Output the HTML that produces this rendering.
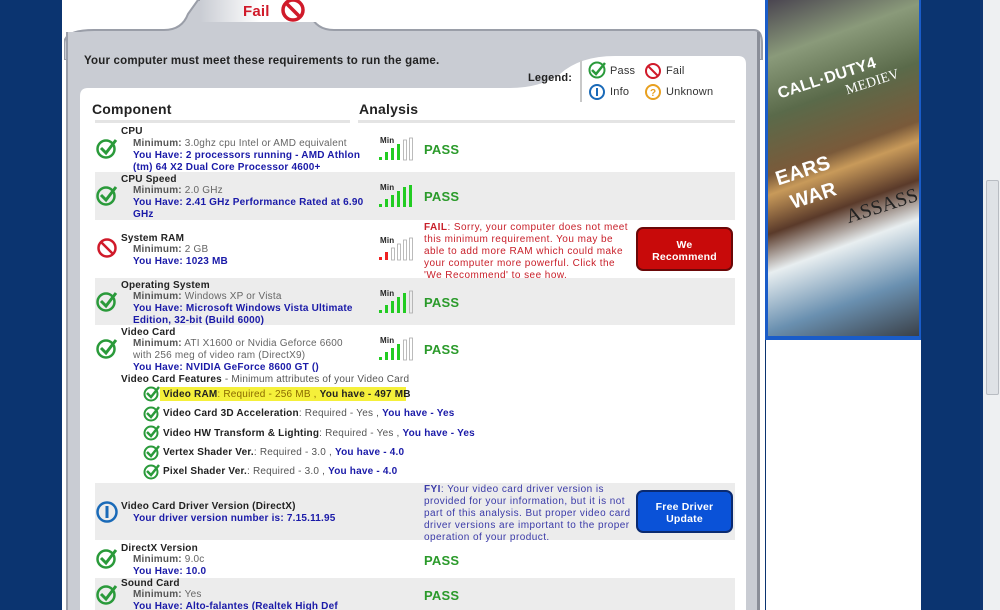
<!DOCTYPE html>
<html style="overflow:hidden;width:1000px;height:610px"><head><meta charset="utf-8"><style>
*{margin:0;padding:0;box-sizing:border-box}
body{width:1000px;height:610px;overflow:hidden;background:#0b3470;font-family:"Liberation Sans",sans-serif;font-size:10px;position:relative;letter-spacing:0.2px}
.a{position:absolute}
.white{left:62px;top:0;width:703px;height:610px;background:#fff}
.row{position:absolute;left:95px;width:640px}
.g{background:#ececec}
.t{font-weight:bold;color:#222;position:absolute;left:121px;line-height:12px}
.m{position:absolute;left:133px;color:#666;line-height:12px}
.m b{color:#555}
.h{position:absolute;left:133px;color:#1a1aa8;font-weight:bold;line-height:12px}
.pass{position:absolute;left:424px;color:#2a9a2a;font-weight:bold;font-size:13px}
.ic{position:absolute;left:96px}
.bars{position:absolute;left:378px}
.feat{position:absolute;left:145px;color:#555;line-height:14px}
.feat b{color:#222}
.feat span{color:#1a1aa8;font-weight:bold}
</style></head><body>
<div class="a white"></div>
<!-- tab -->
<svg class="a" style="left:64px;top:0" width="700" height="60"><path d="M0 60 L0 44 Q0 30 30 30 L100 30 Q118 30 124 14 L134 0 L236 0 L246 14 Q252 30 270 30 L690 30 Q698 30 698 44 L698 60 Z" fill="#c9ccd3" stroke="#9a9ea8" stroke-width="2"/></svg>
<div class="a" style="left:66px;top:32px;width:694px;height:578px;background:#c9ccd3;border-left:2px solid #9a9ea8;border-right:3px solid #8a8e98"></div>
<div class="a" style="left:200px;top:0;width:120px;height:22px;background:linear-gradient(90deg,#c9ccd3,#fff 50%)"></div>
<div class="a" style="left:243px;top:3px;color:#d01a2a;font-weight:bold;font-size:15px">Fail</div>
<svg class="a" style="left:279px;top:-2px" width="28" height="26"><circle cx="14" cy="12" r="10" fill="none" stroke="#d01a2a" stroke-width="3.5"/><line x1="7" y1="5" x2="21" y2="19" stroke="#d01a2a" stroke-width="3.5"/></svg>
<!-- inner white with notch -->
<svg class="a" style="left:80px;top:52px" width="666" height="60"><path d="M0 60 L0 44 Q0 36 8 36 L430 36 Q460 36 480 22 Q500 4 535 4 L658 4 Q666 4 666 12 L666 60 Z" fill="#fff"/></svg>
<div class="a" style="left:80px;top:110px;width:666px;height:500px;background:#fff"></div>
<div class="a" style="left:84px;top:55px;font-weight:bold;font-size:11.5px;color:#222">Your computer must meet these requirements to run the game.</div>
<div class="a" style="left:528px;top:72px;font-weight:bold;font-size:11px;color:#222">Legend:</div>
<div class="a" style="left:580px;top:60px;width:2px;height:42px;background:#c8c8c8"></div>
<svg class="a" style="left:588px;top:61px" width="20" height="18"><circle cx="9" cy="9" r="7.5" fill="none" stroke="#2a9a3a" stroke-width="2"/><path d="M4 9 L8 13 L17 2" fill="none" stroke="#2a9a3a" stroke-width="2.5"/></svg>
<div class="a" style="left:610px;top:65px;color:#333;font-size:11px">Pass</div>
<svg class="a" style="left:644px;top:62px" width="18" height="18"><circle cx="9" cy="9" r="7" fill="none" stroke="#d01a2a" stroke-width="2"/><line x1="4" y1="4" x2="14" y2="14" stroke="#d01a2a" stroke-width="2"/></svg>
<div class="a" style="left:666px;top:65px;color:#333;font-size:11px">Fail</div>
<svg class="a" style="left:588px;top:83px" width="18" height="18"><circle cx="9" cy="9" r="7" fill="none" stroke="#1a6ab8" stroke-width="2"/><rect x="8" y="5" width="2" height="8" fill="#1a6ab8"/></svg>
<div class="a" style="left:610px;top:86px;color:#333;font-size:11px">Info</div>
<svg class="a" style="left:644px;top:83px" width="18" height="18"><circle cx="9" cy="9" r="7" fill="none" stroke="#e8a020" stroke-width="2"/><text x="6" y="13" font-size="10" fill="#e8a020" font-weight="bold" font-family="Liberation Sans">?</text></svg>
<div class="a" style="left:666px;top:86px;color:#333;font-size:11px">Unknown</div>
<div class="a" style="left:92px;top:101px;font-weight:bold;font-size:14px;color:#222">Component</div>
<div class="a" style="left:359px;top:101px;font-weight:bold;font-size:14px;color:#222">Analysis</div>
<div class="a" style="left:95px;top:120px;width:255px;height:3px;background:#e4e4e4"></div>
<div class="a" style="left:358px;top:120px;width:377px;height:3px;background:#e4e4e4"></div>

<div class="row g" style="top:172px;height:48px"></div>
<div class="row g" style="top:278px;height:47px"></div>
<div class="row g" style="top:483px;height:57px"></div>
<div class="row g" style="top:578px;height:40px"></div>

<svg width="0" height="0" style="position:absolute"><defs>
<g id="ck"><circle cx="10" cy="11" r="8.5" fill="none" stroke="#2a9a3a" stroke-width="2.5"/><path d="M5 10 L10 15 L20 2" fill="none" stroke="#2a9a3a" stroke-width="3"/></g>
<g id="sg"><text x="2" y="7" font-size="8" font-weight="bold" fill="#222" font-family="Liberation Sans">Min</text></g>
</defs></svg>

<!-- CPU -->
<div class="t" style="top:126px">CPU</div>
<div class="m" style="top:138px"><b>Minimum:</b> 3.0ghz cpu Intel or AMD equivalent</div>
<div class="h" style="top:150px">You Have: 2 processors running - AMD Athlon<br>(tm) 64 X2 Dual Core Processor 4600+</div>
<svg class="ic" style="top:138px" width="24" height="22"><use href="#ck"/></svg>
<svg class="bars" style="top:136px" width="38" height="26"><use href="#sg"/><rect x="1" y="21" width="3" height="3" fill="#2c2"/><rect x="7" y="16" width="3" height="8" fill="#2c2"/><rect x="13" y="12" width="3" height="12" fill="#2c2"/><rect x="19" y="8" width="3" height="16" fill="#2c2"/><rect x="25.5" y="4" width="3" height="20" fill="none" stroke="#aaa" stroke-width=".8"/><rect x="31.5" y="2" width="3" height="22" fill="none" stroke="#aaa" stroke-width=".8"/></svg>
<div class="pass" style="top:142px">PASS</div>
<!-- CPU Speed -->
<div class="t" style="top:174px">CPU Speed</div>
<div class="m" style="top:185px"><b>Minimum:</b> 2.0 GHz</div>
<div class="h" style="top:197px">You Have: 2.41 GHz Performance Rated at 6.90<br>GHz</div>
<svg class="ic" style="top:185px" width="24" height="22"><use href="#ck"/></svg>
<svg class="bars" style="top:183px" width="38" height="26"><use href="#sg"/><rect x="1" y="21" width="3" height="3" fill="#2c2"/><rect x="7" y="16" width="3" height="8" fill="#2c2"/><rect x="13" y="12" width="3" height="12" fill="#2c2"/><rect x="19" y="8" width="3" height="16" fill="#2c2"/><rect x="25" y="4" width="3" height="20" fill="#2c2"/><rect x="31" y="2" width="3" height="22" fill="#2c2"/></svg>
<div class="pass" style="top:189px">PASS</div>
<!-- RAM -->
<div class="t" style="top:233px">System RAM</div>
<div class="m" style="top:244px"><b>Minimum:</b> 2 GB</div>
<div class="h" style="top:256px">You Have: 1023 MB</div>
<svg class="ic" style="top:237px" width="24" height="22"><circle cx="11" cy="11" r="8.5" fill="none" stroke="#d01a2a" stroke-width="2.5"/><line x1="5" y1="5" x2="17" y2="17" stroke="#d01a2a" stroke-width="2.5"/></svg>
<svg class="bars" style="top:236px" width="38" height="26"><use href="#sg"/><rect x="1" y="21" width="3" height="3" fill="#e22"/><rect x="7" y="16" width="3" height="8" fill="#e22"/><g fill="none" stroke="#aaa" stroke-width=".8"><rect x="13.5" y="12" width="3" height="12"/><rect x="19.5" y="8" width="3" height="16"/><rect x="25.5" y="4" width="3" height="20"/><rect x="31.5" y="2" width="3" height="22"/></g></svg>
<div class="a" style="left:424px;top:222px;color:#c8202a;line-height:12px;width:208px;letter-spacing:0.45px"><b>FAIL</b>: Sorry, your computer does not meet this minimum requirement. You may be able to add more RAM which could make your computer more powerful. Click the 'We Recommend' to see how.</div>
<div class="a" style="left:636px;top:227px;width:97px;height:44px;background:#c80a0a;border:2px solid #6a0808;border-radius:7px;color:#fff;font-weight:bold;font-size:10.5px;text-align:center;padding-top:10px;line-height:12px">We<br>Recommend</div>
<!-- OS -->
<div class="t" style="top:280px">Operating System</div>
<div class="m" style="top:291px"><b>Minimum:</b> Windows XP or Vista</div>
<div class="h" style="top:303px">You Have: Microsoft Windows Vista Ultimate<br>Edition, 32-bit (Build 6000)</div>
<svg class="ic" style="top:291px" width="24" height="22"><use href="#ck"/></svg>
<svg class="bars" style="top:289px" width="38" height="26"><use href="#sg"/><rect x="1" y="21" width="3" height="3" fill="#2c2"/><rect x="7" y="16" width="3" height="8" fill="#2c2"/><rect x="13" y="12" width="3" height="12" fill="#2c2"/><rect x="19" y="8" width="3" height="16" fill="#2c2"/><rect x="25" y="4" width="3" height="20" fill="#2c2"/><rect x="31.5" y="2" width="3" height="22" fill="none" stroke="#aaa" stroke-width=".8"/></svg>
<div class="pass" style="top:295px">PASS</div>
<!-- Video Card -->
<div class="t" style="top:327px">Video Card</div>
<div class="m" style="top:338px;line-height:12px"><b>Minimum:</b> ATI X1600 or Nvidia Geforce 6600<br>with 256 meg of video ram (DirectX9)</div>
<div class="h" style="top:362px">You Have: NVIDIA GeForce 8600 GT ()</div>
<svg class="ic" style="top:338px" width="24" height="22"><use href="#ck"/></svg>
<svg class="bars" style="top:336px" width="38" height="26"><use href="#sg"/><rect x="1" y="21" width="3" height="3" fill="#2c2"/><rect x="7" y="16" width="3" height="8" fill="#2c2"/><rect x="13" y="12" width="3" height="12" fill="#2c2"/><rect x="19" y="8" width="3" height="16" fill="#2c2"/><rect x="25.5" y="4" width="3" height="20" fill="none" stroke="#aaa" stroke-width=".8"/><rect x="31.5" y="2" width="3" height="22" fill="none" stroke="#aaa" stroke-width=".8"/></svg>
<div class="pass" style="top:342px">PASS</div>
<div class="a" style="left:121px;top:374px;color:#555;line-height:12px"><b style="color:#222">Video Card Features</b> - Minimum attributes of your Video Card</div>
<div class="a" style="left:160px;top:387px;width:246px;height:14px;background:#f5f03a"></div>
<svg class="a" style="left:143px;top:385px" width="18" height="18"><circle cx="8" cy="9" r="6.5" fill="none" stroke="#2a9a3a" stroke-width="2"/><path d="M4 8 L8 12 L16 2" fill="none" stroke="#2a9a3a" stroke-width="2.5"/></svg>
<div class="feat" style="top:388px;left:163px;color:#8a6a00"><b>Video RAM</b>: Required - 256 MB , <b>You have - 497 MB</b></div>
<svg class="a" style="left:143px;top:405px" width="18" height="18"><circle cx="8" cy="9" r="6.5" fill="none" stroke="#2a9a3a" stroke-width="2"/><path d="M4 8 L8 12 L16 2" fill="none" stroke="#2a9a3a" stroke-width="2.5"/></svg>
<div class="feat" style="top:407px;left:163px"><b>Video Card 3D Acceleration</b>: Required - Yes , <span>You have - Yes</span></div>
<svg class="a" style="left:143px;top:424px" width="18" height="18"><circle cx="8" cy="9" r="6.5" fill="none" stroke="#2a9a3a" stroke-width="2"/><path d="M4 8 L8 12 L16 2" fill="none" stroke="#2a9a3a" stroke-width="2.5"/></svg>
<div class="feat" style="top:427px;left:163px"><b>Video HW Transform &amp; Lighting</b>: Required - Yes , <span>You have - Yes</span></div>
<svg class="a" style="left:143px;top:444px" width="18" height="18"><circle cx="8" cy="9" r="6.5" fill="none" stroke="#2a9a3a" stroke-width="2"/><path d="M4 8 L8 12 L16 2" fill="none" stroke="#2a9a3a" stroke-width="2.5"/></svg>
<div class="feat" style="top:446px;left:163px"><b>Vertex Shader Ver.</b>: Required - 3.0 , <span>You have - 4.0</span></div>
<svg class="a" style="left:143px;top:463px" width="18" height="18"><circle cx="8" cy="9" r="6.5" fill="none" stroke="#2a9a3a" stroke-width="2"/><path d="M4 8 L8 12 L16 2" fill="none" stroke="#2a9a3a" stroke-width="2.5"/></svg>
<div class="feat" style="top:465px;left:163px"><b>Pixel Shader Ver.</b>: Required - 3.0 , <span>You have - 4.0</span></div>
<!-- Driver -->
<svg class="ic" style="top:500px;left:95px" width="24" height="24"><circle cx="12" cy="12" r="9.5" fill="none" stroke="#1a6ab8" stroke-width="2.5"/><rect x="10.5" y="6" width="3" height="12" fill="#1a6ab8"/></svg>
<div class="t" style="top:501px">Video Card Driver Version (DirectX)</div>
<div class="h" style="top:513px">Your driver version number is: 7.15.11.95</div>
<div class="a" style="left:424px;top:484px;color:#3a3aa8;line-height:12px;width:208px;letter-spacing:0.45px"><b>FYI</b>: Your video card driver version is provided for your information, but it is not part of this analysis. But proper video card driver versions are important to the proper operation of your product.</div>
<div class="a" style="left:636px;top:490px;width:97px;height:43px;background:#0a52d8;border:2px solid #0a2a70;border-radius:7px;color:#fff;font-weight:bold;font-size:10.5px;text-align:center;padding-top:9px;line-height:12px">Free Driver<br>Update</div>
<!-- DirectX -->
<div class="t" style="top:543px">DirectX Version</div>
<div class="m" style="top:554px"><b>Minimum:</b> 9.0c</div>
<div class="h" style="top:566px">You Have: 10.0</div>
<svg class="ic" style="top:548px" width="24" height="22"><use href="#ck"/></svg>
<div class="pass" style="top:553px">PASS</div>
<!-- Sound -->
<div class="t" style="top:578px">Sound Card</div>
<div class="m" style="top:589px"><b>Minimum:</b> Yes</div>
<div class="h" style="top:601px">You Have: Alto-falantes (Realtek High Def</div>
<svg class="ic" style="top:584px" width="24" height="22"><use href="#ck"/></svg>
<div class="pass" style="top:588px">PASS</div>

<!-- right column -->
<div class="a" style="left:765px;top:0;width:156px;height:340px;background:#1a5cc8;"></div>
<div class="a" style="left:768px;top:0;width:151px;height:336px;background:linear-gradient(160deg,#4a4550 0%,#8a9a7a 15%,#5a6a4a 30%,#7a5a3a 45%,#c89a5a 50%,#5a3a2a 60%,#e8eef0 70%,#6a90b0 85%,#3a4048 100%)"></div>
<div class="a" style="left:776px;top:70px;color:#fff;font-weight:bold;font-size:16px;transform:rotate(-18deg)">CALL·DUTY4</div>
<div class="a" style="left:775px;top:160px;color:#fff;font-weight:bold;font-size:20px;transform:rotate(-18deg)">EARS</div>
<div class="a" style="left:790px;top:185px;color:#fff;font-weight:bold;font-size:20px;transform:rotate(-18deg)">WAR</div>
<div class="a" style="left:845px;top:75px;color:#fff;font-family:'Liberation Serif';font-size:14px;transform:rotate(-18deg)">MEDIEV</div>
<div class="a" style="left:845px;top:195px;color:#222;font-family:'Liberation Serif';font-size:20px;transform:rotate(-18deg)">ASSASS</div>
<div class="a" style="left:766px;top:340px;width:155px;height:270px;background:#fff"></div>
<!-- scrollbar -->
<div class="a" style="left:983px;top:0;width:17px;height:610px;background:#eef0f2"></div>
<div class="a" style="left:986px;top:180px;width:13px;height:215px;background:#dfe2e6;border:1px solid #b8bcc2;border-radius:2px"></div>
</body></html>
